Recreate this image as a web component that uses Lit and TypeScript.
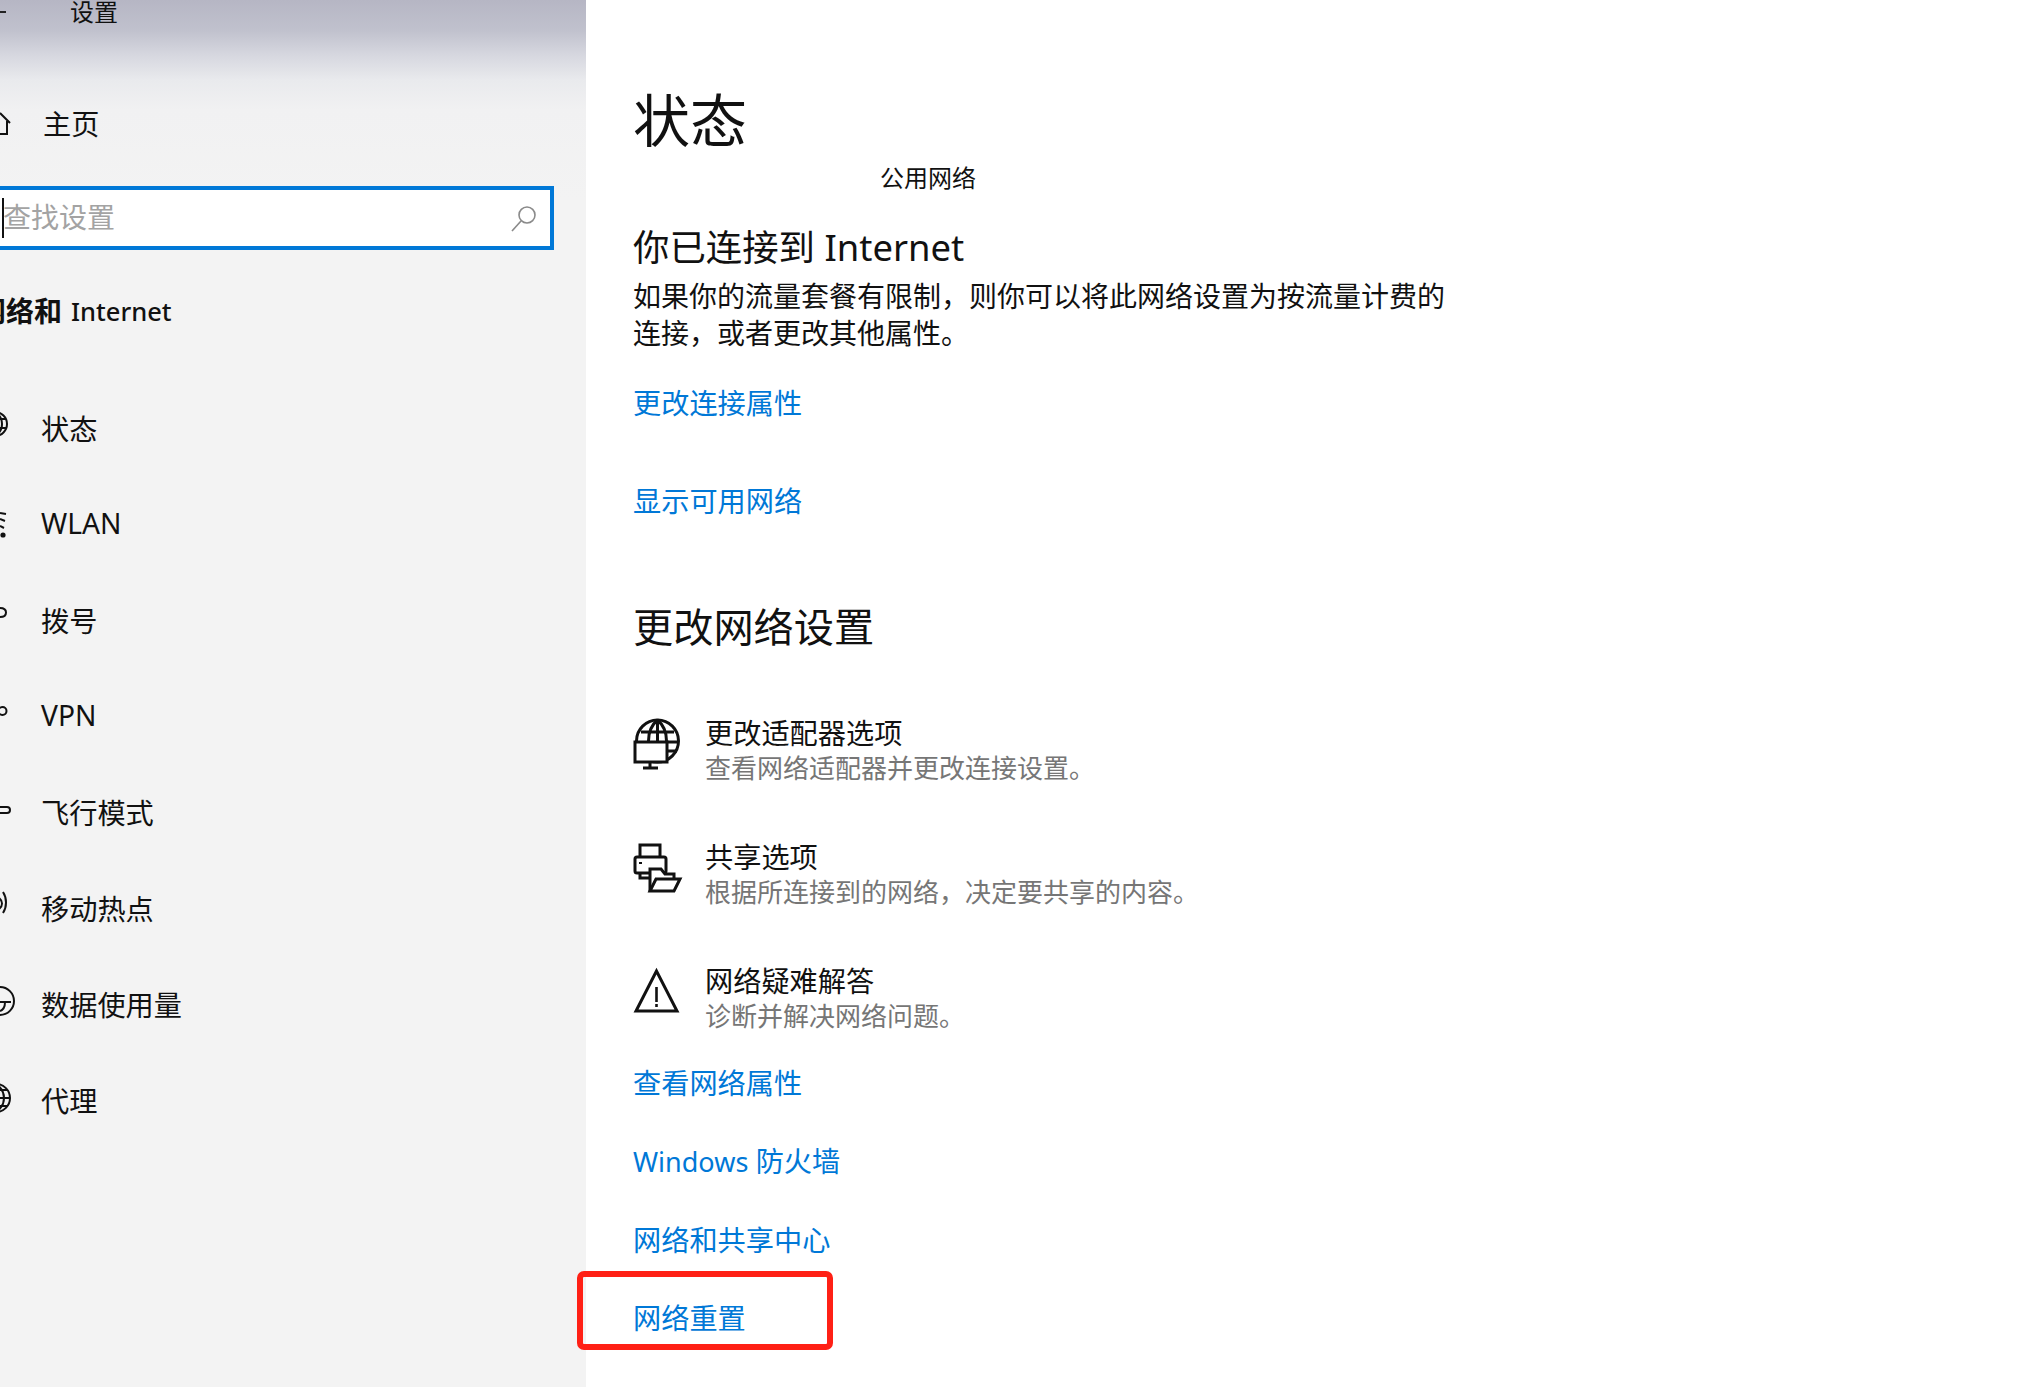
import { LitElement, html, css, svg } from "lit";
import { customElement } from "lit/decorators.js";

const navIcons = [
  svg`<circle cx="-5" cy="16" r="12"/><path d="M-16 11H6M-16 20H6M-5 4c5 3 7 7 7 12s-2 9-7 12"/>`,
  svg`<path d="M0 9l6 1M0 15l5 2M0 22l4 2"/><circle cx="3" cy="31" r="2.6" fill="currentColor" stroke="none"/>`,
  svg`<path d="M0 8c4 0 6 2 6 4.5S4 17 0 17"/>`,
  svg`<circle cx="2.5" cy="15" r="4"/>`,
  svg`<path d="M0 15h7a3 3 0 0 1 0 6H0"/>`,
  svg`<path d="M3 4c4 6 4 15 0 21M-1 10c4 3 4 8 0 11"/>`,
  svg`<path d="M0 3a14 14 0 0 1 0 28M0 18h11M0 27c3-1 5-4 5-9"/>`,
  svg`<circle cx="-4" cy="18" r="14"/><path d="M-17 18H10M-17 10H8M-17 26H8M-4 4c6 4 8 9 8 14s-2 10-8 14"/>`,
];
const navLabels = ["状态", "WLAN", "拨号", "VPN", "飞行模式", "移动热点", "数据使用量", "代理"];

@customElement("app-root")
export class AppRoot extends LitElement {
  static styles = css`
    :host {
      display: block;
      width: 2026px;
      height: 1387px;
      overflow: hidden;
      background: #fff;
      font-family: "Noto Sans", "Noto Sans CJK SC", sans-serif;
      color: #111;
    }
    .page { display: flex; height: 1387px; }
    .side {
      width: 586px;
      flex: none;
      overflow: hidden;
      background: linear-gradient(180deg, #b6b6c4 0, #c0c1cd 30px, #d6d7df 55px, #e9eaed 80px, #f1f1f2 110px, #f3f3f3 200px);
    }
    .title { display: flex; align-items: center; height: 26px; margin-top: -1px; font-size: 24px; line-height: 26px; }
    .dash { width: 6px; height: 2px; background: #222; margin-right: 64px; }
    .home { display: flex; align-items: center; height: 40px; margin-top: 79px; }
    .home svg { width: 12px; height: 40px; flex: none; fill: none; stroke: #111; stroke-width: 2; overflow: visible; }
    .home span { margin-left: 31px; font-size: 28.2px; line-height: 40px; }
    .search {
      display: flex;
      align-items: center;
      justify-content: space-between;
      box-sizing: border-box;
      width: 554px;
      height: 64px;
      margin-top: 42px;
      background: #fff;
      border: 4px solid #0078d7;
      border-left: 0;
      padding: 0 13px 0 2px;
    }
    .ph { border-left: 2px solid #111; font-size: 28px; line-height: 40px; color: #a3a3a3; white-space: nowrap; height: 40px; }
    .ph span { display: block; margin: -1px 0 0 -1px; }
    .search svg { width: 27px; height: 27px; fill: none; stroke: #8a8a8a; stroke-width: 1.6; }
    .section { display: flex; align-items: center; gap: 9px; margin: 42px 0 0 -22px; height: 38px; font-size: 28px; line-height: 38px; font-weight: 700; white-space: nowrap; }
    .section i { font-style: normal; font-size: 25.5px; font-weight: 500; }
    .nav { margin-top: 49px; display: flex; flex-direction: column; }
    .row { display: flex; align-items: center; height: 96px; font-size: 28.2px; }
    .row svg { width: 14px; height: 40px; flex: none; fill: none; stroke: #111; stroke-width: 2; color: #111; overflow: visible; transform: translateY(1px); }
    .row span { margin-left: 27px; }
    .main { padding-left: 47px; flex: 1; min-width: 0; }
    h1 { margin: 78px 0 0; font-size: 57px; line-height: 84px; font-weight: 400; }
    .sub { margin: 1px 0 0 247px; font-size: 24px; line-height: 30px; height: 30px; }
    h2 { font-weight: 400; margin: 0; }
    .h-a { font-size: 36.4px; line-height: 54px; margin-top: 27px; }
    .para { width: 820px; font-size: 28px; line-height: 37px; margin-top: 4px; }
    a { display: block; width: fit-content; color: #0078d7; font-size: 28.2px; line-height: 40px; text-decoration: none; }
    .l1 { margin-top: 31px; }
    .l2 { margin-top: 58px; }
    .h-b { font-size: 40.2px; line-height: 60px; margin-top: 76px; }
    .items { margin-top: 58px; display: flex; flex-direction: column; gap: 54px; }
    .item { display: flex; height: 70px; }
    .item svg { width: 48px; height: 56px; flex: none; margin: 3px 24px 0 0; fill: none; stroke: #111; stroke-width: 3; overflow: visible; }
    .t { font-size: 28.2px; line-height: 36px; }
    .d { font-size: 26px; line-height: 34px; color: #767676; white-space: nowrap; }
    .l3 { margin-top: 30px; }
    .l4 { margin-top: 38px; }
    .l4 span { font-size: 27px; }
    .l5 { margin-top: 38px; }
    .last { position: relative; margin-top: 38px; }
    .mark {
      position: absolute;
      left: -56px;
      top: -27px;
      width: 256px;
      height: 79px;
      box-sizing: border-box;
      border: 6px solid #ff2015;
      border-radius: 7px;
    }
  `;

  render() {
    return html`<div class="page">
      <aside class="side">
        <div class="title"><div class="dash"></div>设置</div>
        <div class="home">
          <svg viewBox="0 0 12 40"><path d="M0 9l10 10M7 17v13H0"/></svg>
          <span>主页</span>
        </div>
        <div class="search">
          <div class="ph"><span>查找设置</span></div>
          <svg viewBox="0 0 27 27"><circle cx="17" cy="10" r="8"/><path d="M11 16 2 26"/></svg>
        </div>
        <div class="section"><span>网络和</span><i>Internet</i></div>
        <div class="nav">
          ${navLabels.map(
            (l, i) => html`<div class="row"><svg viewBox="0 0 14 40">${navIcons[i]}</svg><span>${l}</span></div>`
          )}
        </div>
      </aside>
      <main class="main">
        <h1>状态</h1>
        <div class="sub">公用网络</div>
        <h2 class="h-a">你已连接到 Internet</h2>
        <div class="para">如果你的流量套餐有限制，则你可以将此网络设置为按流量计费的连接，或者更改其他属性。</div>
        <a class="l1" href="#">更改连接属性</a>
        <a class="l2" href="#">显示可用网络</a>
        <h2 class="h-b">更改网络设置</h2>
        <div class="items">
          <div class="item">
            <svg viewBox="0 0 48 56">
              <circle cx="24.5" cy="23" r="21"/>
              <path d="M24.5 2c-6 5-9 12-9 21M24.5 2c6 5 9 12 9 21v4c0 6-1 11-7 17M24.5 2v22M8 14h33M34 24h11M34 33h10"/>
              <rect x="2" y="24" width="32" height="20" fill="#fff"/>
              <path d="M17 44v5M10 50h15"/>
            </svg>
            <div><div class="t">更改适配器选项</div><div class="d">查看网络适配器并更改连接设置。</div></div>
          </div>
          <div class="item">
            <svg viewBox="0 0 48 56">
              <path d="M7 15V3h20v12"/>
              <rect x="2" y="15" width="31" height="16" rx="2"/>
              <path d="M7 31v5h12"/>
              <path d="M6 21h3" stroke-width="2"/>
              <path d="M17 49V27h11l4 5h9v6H23" fill="#fff"/>
              <path d="M17 49l6-12h24l-6 12z" fill="#fff"/>
            </svg>
            <div><div class="t">共享选项</div><div class="d">根据所连接到的网络，决定要共享的内容。</div></div>
          </div>
          <div class="item">
            <svg viewBox="0 0 48 56">
              <path d="M23.5 5 3 45h41z"/>
              <path d="M23.5 21v15M23.5 38v3" stroke-width="2.6"/>
            </svg>
            <div><div class="t">网络疑难解答</div><div class="d">诊断并解决网络问题。</div></div>
          </div>
        </div>
        <a class="l3" href="#">查看网络属性</a>
        <a class="l4" href="#"><span>Windows</span> 防火墙</a>
        <a class="l5" href="#">网络和共享中心</a>
        <div class="last"><a href="#">网络重置</a><div class="mark"></div></div>
      </main>
    </div>`;
  }
}
